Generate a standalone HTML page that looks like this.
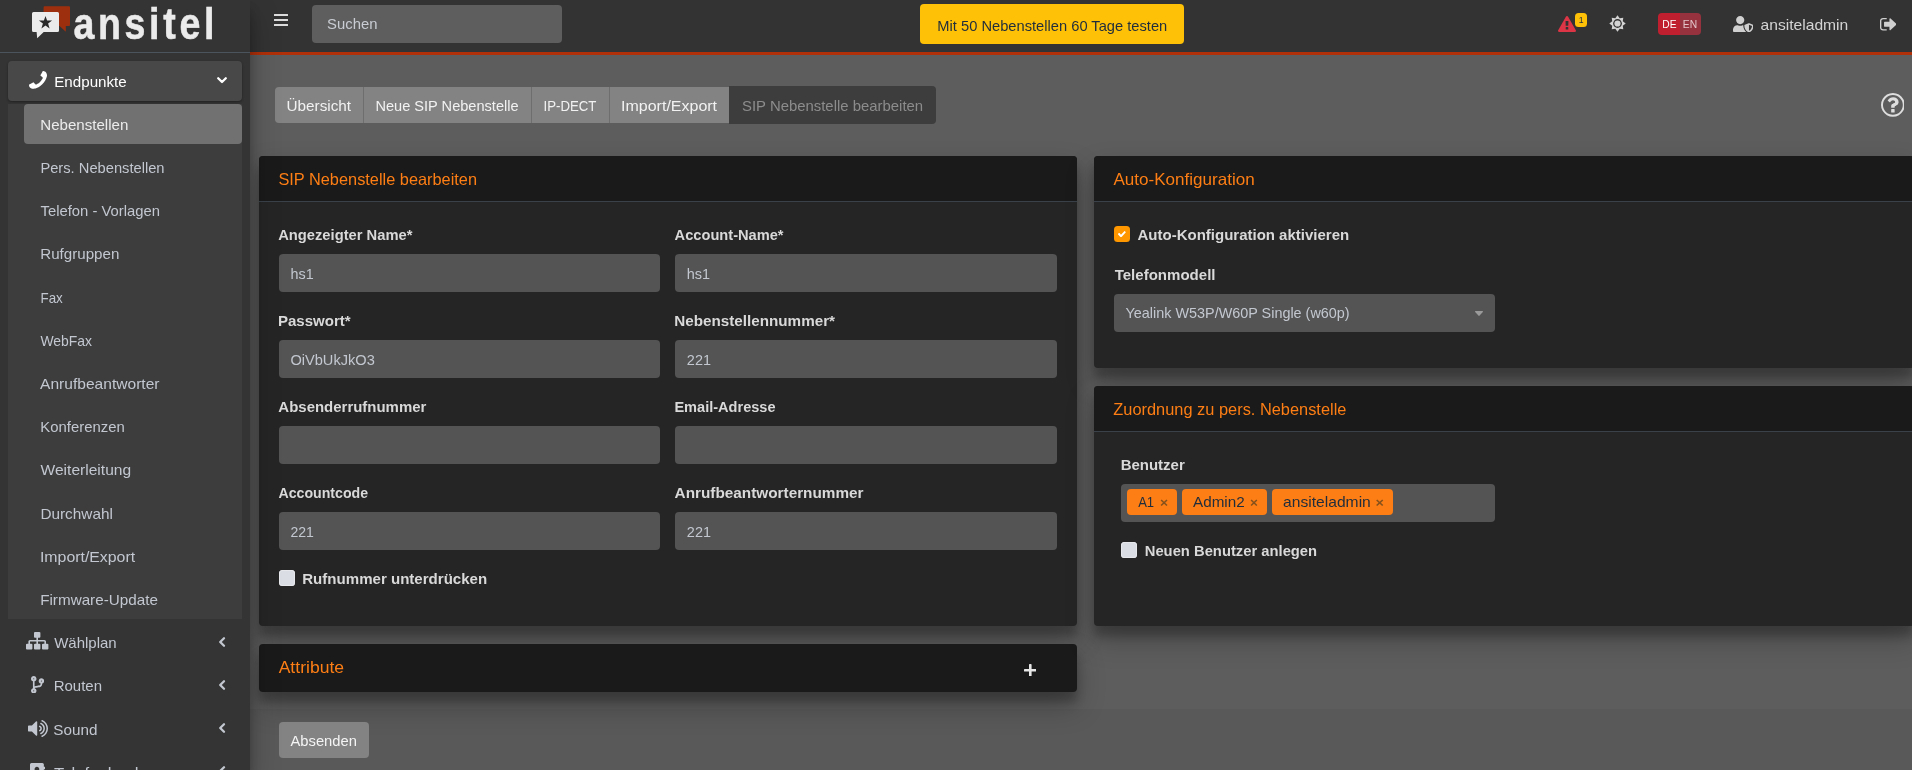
<!DOCTYPE html>
<html lang="de"><head><meta charset="utf-8"><title>ansitel</title>
<style>
*{box-sizing:border-box}
html,body{margin:0;padding:0}
body{width:1912px;height:770px;overflow:hidden;background:#5d5d5d;font-family:"Liberation Sans",sans-serif;font-size:15px;line-height:24px;color:#e0e0e0;position:relative}
svg.ic{display:block;position:absolute}
#txt{position:absolute;left:0;top:0;width:1912px;height:770px;z-index:50;overflow:hidden;will-change:transform}
.tx{position:absolute;white-space:nowrap;transform-origin:0 0;display:block}
/* sidebar */
#sb{position:absolute;left:0;top:0;width:250px;height:770px;background:#343434;z-index:30;box-shadow:0 14px 28px rgba(0,0,0,.25),0 10px 10px rgba(0,0,0,.22)}
#brand{position:absolute;left:0;top:0;width:250px;height:53px;border-bottom:1px solid #4b545c}
.ni{position:absolute;left:8px;width:234px;height:40px;border-radius:4px;color:#c2c7d0}
.ni.sub{left:24px;width:218px}
.ni.open{background:#484848;color:#fff;box-shadow:0 1px 3px rgba(0,0,0,.12),0 1px 2px rgba(0,0,0,.24)}
.ni.act{background:#717171}
#tree{position:absolute;left:8px;top:104px;width:234px;height:515px;background:#3d3d3d}
/* navbar */
#nav{position:absolute;left:250px;top:0;width:1662px;height:55px;background:#333;border-bottom:3px solid #b03009;z-index:20;box-shadow:inset 0 -1px 0 #2d3337,0 1px 0 #595f61}
#search{position:absolute;left:62px;top:5px;width:250px;height:38px;border-radius:4px;background:#5e5e5e}
#trial{position:absolute;left:670px;top:4px;width:264px;height:40px;border-radius:4px;background:#ffc107}
#badge{position:absolute;left:1325px;top:13px;width:12px;height:14px;border-radius:3.5px;background:#ffc107}
#lang{position:absolute;left:1408px;top:13px;width:43px;height:22px;border-radius:4px;overflow:hidden}
#lang i{position:absolute;top:0;height:22px;display:block}
#lang .de{left:0;width:22px;background:#c01f30}
#lang .en{left:22px;width:21px;background:#96323e}
/* tabs */
.tab{position:absolute;top:87px;height:36px;background:#838383}
.tab.dis{top:86px;height:38px;background:#3d3d3d;border-radius:0 4px 4px 0}
.sep{position:absolute;top:87px;height:36px;width:1px;background:#6e6e6e}
/* cards */
.card{position:absolute;background:#252525;border-radius:4px;box-shadow:0 14px 28px rgba(0,0,0,.25),0 10px 10px rgba(0,0,0,.22)}
.card .hd{position:absolute;left:0;top:0;right:0;height:46px;background:#1a1a1a;border-bottom:1px solid #3a4149;border-radius:4px 4px 0 0}
.inp{position:absolute;height:38px;border-radius:4px;background:#545454}
.cb{position:absolute;width:16px;height:16px;border-radius:3.5px;background:#dadde3;box-shadow:inset 0 0 0 1px #e6e8ec}
.cb.on{background:#ff9800;box-shadow:none}
.tag{position:absolute;top:5px;height:26px;border-radius:4px;background:#fd7e14}
#send{position:absolute;left:279px;top:722px;width:90px;height:36px;border-radius:4px;background:#838383}

#foot{position:absolute;left:250px;top:709px;width:1662px;height:61px;background:rgba(0,0,0,.045)}

</style></head>
<body>
<div id="sb">
  <div id="brand">
    <svg class="ic" style="left:30px;top:4px" width="44" height="38" viewBox="30 4 44 38">
      <path fill="#9e2f0e" d="M44.6 6.2h24.4a1 1 0 0 1 1 1v17.8a1 1 0 0 1-1 1h-3.2v5.8l-6.2-5.8h-16v-18.8a1 1 0 0 1 1-1z"/>
      <path fill="#ebebeb" d="M33.5 12h24a1.5 1.5 0 0 1 1.5 1.5v17a1.5 1.5 0 0 1-1.5 1.5h-13.8l-6.5 6.2l-.6-6.2h-3.1a1.5 1.5 0 0 1-1.5-1.5v-17a1.5 1.5 0 0 1 1.5-1.5z"/>
      <path fill="#2a2a2a" d="M45.5 15.9l1.6 4.7h5l-4 3l1.5 4.8l-4.1-2.9l-4.1 2.9l1.5-4.8l-4-3h5z"/>
    </svg>
  </div>
  <div class="ni open" style="top:61px"><svg class="ic" width="18" height="17.8" viewBox="0 0 1408 1408" preserveAspectRatio="none" style="left:20.5px;top:10.3px"><path fill="currentColor" d="M1408 1112Q1408 1139 1398.0 1182.5Q1388 1226 1377 1251Q1356 1301 1255 1357Q1161 1408 1069 1408Q1042 1408 1016.0 1404.5Q990 1401 958.5 1392.0Q927 1383 911.5 1377.5Q896 1372 856.0 1357.0Q816 1342 807 1339Q709 1304 632 1256Q505 1177 368.0 1040.0Q231 903 152 776Q104 699 69 601Q66 592 51.0 552.0Q36 512 30.5 496.5Q25 481 16.0 449.5Q7 418 3.5 392.0Q0 366 0 339Q0 247 51 153Q107 52 157 31Q182 20 225.5 10.0Q269 0 296 0Q310 0 317 3Q335 9 370 79Q381 98 400.0 133.0Q419 168 435.0 196.5Q451 225 466 250Q469 254 483.5 275.0Q498 296 505.0 310.5Q512 325 512 339Q512 359 483.5 389.0Q455 419 421.5 444.0Q388 469 359.5 497.0Q331 525 331 543Q331 552 336.0 565.5Q341 579 344.5 586.0Q348 593 358.5 610.0Q369 627 370 629Q446 766 544.0 864.0Q642 962 779 1038Q781 1039 798.0 1049.5Q815 1060 822.0 1063.5Q829 1067 842.5 1072.0Q856 1077 865 1077Q883 1077 911.0 1048.5Q939 1020 964.0 986.5Q989 953 1019.0 924.5Q1049 896 1069 896Q1083 896 1097.5 903.0Q1112 910 1133.0 924.5Q1154 939 1158 942Q1183 957 1211.5 973.0Q1240 989 1275.0 1008.0Q1310 1027 1329 1038Q1399 1073 1405 1091Q1408 1098 1408 1112Z" transform="translate(1408,0) scale(-1,1)"/></svg><svg class="ic" style="left:207px;top:13px" width="14" height="12" viewBox="0 0 14 12"><path d="M3.2 4.2L7 8L10.8 4.2" fill="none" stroke="#fff" stroke-width="2.3" stroke-linecap="round" stroke-linejoin="round"/></svg></div>
  <div id="tree"></div>
  <div class="ni sub act" style="top:104.2px"></div>
  <div class="ni" style="top:622.6px"><svg class="ic" width="22.4" height="17.6" viewBox="0 0 1792 1536" preserveAspectRatio="none" style="left:18.2px;top:9.7px"><path fill="currentColor" d="M1792 1120V1440Q1792 1480 1764.0 1508.0Q1736 1536 1696 1536H1376Q1336 1536 1308.0 1508.0Q1280 1480 1280 1440V1120Q1280 1080 1308.0 1052.0Q1336 1024 1376 1024H1472V832H960V1024H1056Q1096 1024 1124.0 1052.0Q1152 1080 1152 1120V1440Q1152 1480 1124.0 1508.0Q1096 1536 1056 1536H736Q696 1536 668.0 1508.0Q640 1480 640 1440V1120Q640 1080 668.0 1052.0Q696 1024 736 1024H832V832H320V1024H416Q456 1024 484.0 1052.0Q512 1080 512 1120V1440Q512 1480 484.0 1508.0Q456 1536 416 1536H96Q56 1536 28.0 1508.0Q0 1480 0 1440V1120Q0 1080 28.0 1052.0Q56 1024 96 1024H192V832Q192 780 230.0 742.0Q268 704 320 704H832V512H736Q696 512 668.0 484.0Q640 456 640 416V96Q640 56 668.0 28.0Q696 0 736 0H1056Q1096 0 1124.0 28.0Q1152 56 1152 96V416Q1152 456 1124.0 484.0Q1096 512 1056 512H960V704H1472Q1524 704 1562.0 742.0Q1600 780 1600 832V1024H1696Q1736 1024 1764.0 1052.0Q1792 1080 1792 1120Z"/></svg><svg class="ic chev" style="left:208px;top:12.3px" width="12" height="14" viewBox="0 0 12 14"><path d="M8 3.2L4.2 7L8 10.8" fill="none" stroke="#c2c7d0" stroke-width="2.3" stroke-linecap="round" stroke-linejoin="round"/></svg></div>
  <div class="ni" style="top:665.8px"><svg class="ic" style="left:22.8px;top:10.1px" width="13.2" height="17.6" viewBox="0 0 384 512"><path fill="currentColor" d="M384 144c0-44.200-35.800-80-80-80s-80 35.800-80 80c0 36.400 24.300 67.100 57.500 76.800-.6 16.100-4.200 28.500-11 36.900-15.400 19.200-49.300 22.400-85.200 25.700-28.200 2.600-57.400 5.400-81.300 16.900v-144c32.500-10.200 56-40.500 56-76.300 0-44.200-35.800-80-80-80S0 35.800 0 80c0 35.800 23.500 66.100 56 76.300v199.300C23.500 365.900 0 396.200 0 432c0 44.200 35.800 80 80 80s80-35.800 80-80c0-34-21.200-63.100-51.200-74.600 3.100-5.200 7.800-9.800 14.900-13.400 16.200-8.200 40.400-10.400 66.100-12.800 42.200-3.900 90-8.400 118.200-43.400 14-17.400 21.100-39.800 21.600-67.900 31.600-10.800 54.400-40.700 54.400-75.900zM80 64c8.800 0 16 7.200 16 16s-7.200 16-16 16-16-7.200-16-16 7.200-16 16-16zm0 384c-8.800 0-16-7.200-16-16s7.200-16 16-16 16 7.200 16 16-7.200 16-16 16zm224-320c8.800 0 16 7.200 16 16s-7.200 16-16 16-16-7.200-16-16 7.200-16 16-16z"/></svg><svg class="ic chev" style="left:208px;top:12.3px" width="12" height="14" viewBox="0 0 12 14"><path d="M8 3.2L4.2 7L8 10.8" fill="none" stroke="#c2c7d0" stroke-width="2.3" stroke-linecap="round" stroke-linejoin="round"/></svg></div>
  <div class="ni" style="top:709px"><svg class="ic" width="20" height="17" viewBox="0 0 1664 1422" preserveAspectRatio="none" style="left:19.5px;top:11px"><path fill="currentColor" d="M768 167V1255Q768 1281 749.0 1300.0Q730 1319 704.0 1319.0Q678 1319 659 1300L326 967H64Q38 967 19.0 948.0Q0 929 0 903V519Q0 493 19.0 474.0Q38 455 64 455H326L659 122Q678 103 704.0 103.0Q730 103 749.0 122.0Q768 141 768 167ZM997 946Q987 951 972 951Q946 951 927.0 932.5Q908 914 908 887Q908 866 920.0 851.5Q932 837 949.0 826.5Q966 816 983.0 803.5Q1000 791 1012.0 767.5Q1024 744 1024.0 711.0Q1024 678 1012.0 654.5Q1000 631 983.0 618.5Q966 606 949.0 595.5Q932 585 920.0 570.5Q908 556 908 535Q908 508 927.0 489.5Q946 471 972 471Q987 471 997 476Q1067 503 1109.5 569.0Q1152 635 1152.0 711.0Q1152 787 1109.5 852.5Q1067 918 997 946ZM1098 1182Q1085 1187 1073 1187Q1046 1187 1027.0 1168.0Q1008 1149 1008 1123Q1008 1084 1047 1064Q1103 1035 1123 1020Q1197 966 1238.5 884.5Q1280 803 1280.0 711.0Q1280 619 1238.5 537.5Q1197 456 1123 402Q1103 387 1047 358Q1008 338 1008 299Q1008 273 1027.0 254.0Q1046 235 1072 235Q1085 235 1098 240Q1238 299 1323.0 428.5Q1408 558 1408.0 711.0Q1408 864 1323.0 993.5Q1238 1123 1098 1182ZM1199 1417Q1186 1422 1173 1422Q1147 1422 1128.0 1403.0Q1109 1384 1109 1358Q1109 1322 1148 1299Q1155 1295 1170.5 1288.5Q1186 1282 1193 1278Q1239 1253 1275 1227Q1398 1136 1467.0 1000.0Q1536 864 1536.0 711.0Q1536 558 1467.0 422.0Q1398 286 1275 195Q1239 169 1193 144Q1186 140 1170.5 133.5Q1155 127 1148 123Q1109 100 1109 64Q1109 38 1128.0 19.0Q1147 0 1173 0Q1186 0 1199 5Q1410 96 1537.0 288.5Q1664 481 1664.0 711.0Q1664 941 1537.0 1133.5Q1410 1326 1199 1417Z"/></svg><svg class="ic chev" style="left:208px;top:12.3px" width="12" height="14" viewBox="0 0 12 14"><path d="M8 3.2L4.2 7L8 10.8" fill="none" stroke="#c2c7d0" stroke-width="2.3" stroke-linecap="round" stroke-linejoin="round"/></svg></div>
  <div class="ni" style="top:752.2px"><svg class="ic" width="15" height="17.6" viewBox="0 0 1664 1792" preserveAspectRatio="none" style="left:22px;top:10.5px"><path fill="currentColor" d="M1201 1238Q1201 1181 1195.5 1131.0Q1190 1081 1174.5 1030.5Q1159 980 1135.0 944.5Q1111 909 1071.0 886.5Q1031 864 980 864Q974 868 946.5 884.5Q919 901 904.0 909.0Q889 917 863.5 929.0Q838 941 814.5 946.0Q791 951 768.0 951.0Q745 951 721.5 946.0Q698 941 672.5 929.0Q647 917 632.0 909.0Q617 901 589.5 884.5Q562 868 556 864Q505 864 465.0 886.5Q425 909 401.0 944.5Q377 980 361.5 1030.5Q346 1081 340.5 1131.0Q335 1181 335 1238Q335 1311 377.0 1359.5Q419 1408 480 1408H1056Q1117 1408 1159.0 1359.5Q1201 1311 1201 1238ZM1028 644Q1028 536 951.5 460.0Q875 384 768.0 384.0Q661 384 584.5 460.0Q508 536 508 644Q508 751 584.5 827.0Q661 903 768.0 903.0Q875 903 951.5 827.0Q1028 751 1028 644ZM1664 1184V1376Q1664 1390 1655.0 1399.0Q1646 1408 1632 1408H1536V1632Q1536 1698 1489.0 1745.0Q1442 1792 1376 1792H160Q94 1792 47.0 1745.0Q0 1698 0 1632V160Q0 94 47.0 47.0Q94 0 160 0H1376Q1442 0 1489.0 47.0Q1536 94 1536 160V384H1632Q1646 384 1655.0 393.0Q1664 402 1664 416V608Q1664 622 1655.0 631.0Q1646 640 1632 640H1536V768H1632Q1646 768 1655.0 777.0Q1664 786 1664 800V992Q1664 1006 1655.0 1015.0Q1646 1024 1632 1024H1536V1152H1632Q1646 1152 1655.0 1161.0Q1664 1170 1664 1184Z"/></svg><svg class="ic chev" style="left:208px;top:12.3px" width="12" height="14" viewBox="0 0 12 14"><path d="M8 3.2L4.2 7L8 10.8" fill="none" stroke="#c2c7d0" stroke-width="2.3" stroke-linecap="round" stroke-linejoin="round"/></svg></div>
</div>

<div id="nav">
  <svg class="ic" style="left:24px;top:14px" width="14" height="12" viewBox="0 0 14 12"><path fill="#dcdcdc" d="M.3 0h13.4a.3.3 0 0 1 .3.3v1.400a.3.3 0 0 1-.3.300h-13.400a.3.3 0 0 1-.3-.3v-1.400a.3.3 0 0 1 .3-.3zM.3 5h13.400a.3.3 0 0 1 .3.300v1.400a.3.3 0 0 1-.3.300h-13.400a.3.3 0 0 1-.3-.3v-1.400a.3.3 0 0 1 .3-.3zM.3 10h13.400a.3.3 0 0 1 .3.300v1.400a.3.3 0 0 1-.3.300h-13.400a.3.3 0 0 1-.3-.3v-1.400a.3.3 0 0 1 .3-.3z"/></svg>
  <div id="search"></div>
  <div id="trial"></div>
  <svg class="ic" width="18" height="16" viewBox="0 0 1794 1664" preserveAspectRatio="none" style="left:1308.1px;top:16px"><path fill="#dc3545" d="M1025.013888888889 1375.0V1185.0Q1025.013888888889 1171.0 1015.5138888888889 1161.5Q1006.0138888888889 1152.0 993.0138888888889 1152.0H801.0138888888889Q788.0138888888889 1152.0 778.5138888888889 1161.5Q769.0138888888889 1171.0 769.0138888888889 1185.0V1375.0Q769.0138888888889 1389.0 778.5138888888889 1398.5Q788.0138888888889 1408.0 801.0138888888889 1408.0H993.0138888888889Q1006.0138888888889 1408.0 1015.5138888888889 1398.5Q1025.013888888889 1389.0 1025.013888888889 1375.0ZM1023.0138888888889 1001.0 1041.013888888889 542.0Q1041.013888888889 530.0 1031.013888888889 523.0Q1018.0138888888889 512.0 1007.0138888888889 512.0H787.0138888888889Q776.0138888888889 512.0 763.0138888888889 523.0Q753.0138888888889 530.0 753.0138888888889 544.0L770.0138888888889 1001.0Q770.0138888888889 1011.0 780.0138888888889 1017.5Q790.0138888888889 1024.0 804.0138888888889 1024.0H989.0138888888889Q1003.0138888888889 1024.0 1012.5138888888889 1017.5Q1022.0138888888889 1011.0 1023.0138888888889 1001.0ZM1009.0138888888889 67.0 1777.013888888889 1475.0Q1812.013888888889 1538.0 1775.013888888889 1601.0Q1758.013888888889 1630.0 1728.513888888889 1647.0Q1699.013888888889 1664.0 1665.013888888889 1664.0H129.01388888888889Q95.01388888888889 1664.0 65.51388888888889 1647.0Q36.013888888888886 1630.0 19.013888888888886 1601.0Q-17.986111111111114 1538.0 17.013888888888886 1475.0L785.0138888888889 67.0Q802.0138888888889 36.0 832.0138888888889 18.0Q862.0138888888889 0.0 897.0138888888889 0.0Q932.0138888888889 0.0 962.0138888888889 18.0Q992.0138888888889 36.0 1009.0138888888889 67.0Z"/></svg>
  <div id="badge"></div>
  <svg class="ic" style="left:1359px;top:15.1px" width="17" height="17" viewBox="-8.5 -8.5 17 17"><path fill="#d2d2d2" d="M0.00 -8.20L2.18 -5.27L5.80 -5.80L5.27 -2.18L8.20 0.00L5.27 2.18L5.80 5.80L2.18 5.27L0.00 8.20L-2.18 5.27L-5.80 5.80L-5.27 2.18L-8.20 0.00L-5.27 -2.18L-5.80 -5.80L-2.18 -5.27Z"/><circle r="4.4" fill="#333"/><circle r="3.1" fill="#d2d2d2"/></svg>
  <div id="lang"><i class="de"></i><i class="en"></i></div>
  <svg class="ic" style="left:1482.8px;top:15.8px" width="20.6" height="16.4" preserveAspectRatio="none" viewBox="0 0 640 512"><path fill="#d0d0d0" d="M622.3 271.1l-115.2-45c-4.1-1.600-12.600-3.700-22.200 0l-115.200 45c-10.700 4.200-17.700 14-17.700 24.900 0 111.600 68.700 188.800 132.900 213.900 9.600 3.700 18 1.600 22.200 0C558.400 489.900 640 420.500 640 296c0-10.900-7-20.700-17.700-24.900zM496 462.400V273.300l95.500 37.300c-5.600 87.100-60.900 135.400-95.500 151.800zM224 256c70.700 0 128-57.300 128-128S294.700 0 224 0 96 57.300 96 128s57.300 128 128 128zm96 40c0-2.500.8-4.800 1.100-7.200-2.500-.1-4.900-.8-7.500-.8h-16.700c-22.200 10.200-46.900 16-72.900 16s-50.600-5.800-72.900-16h-16.700C60.200 288 0 348.200 0 422.400V464c0 26.500 21.500 48 48 48h352c6.800 0 13.300-1.500 19.200-4-54-42.900-99.200-116.700-99.200-212z"/></svg>
  <svg class="ic" width="16.5" height="12.5" viewBox="0 0 1568 1280" preserveAspectRatio="none" style="left:1629.5px;top:18px"><path fill="#d0d0d0" d="M640 1184Q640 1188 641.0 1204.0Q642 1220 641.5 1230.5Q641 1241 638.5 1254.0Q636 1267 628.5 1273.5Q621 1280 608 1280H288Q169 1280 84.5 1195.5Q0 1111 0 992V288Q0 169 84.5 84.5Q169 0 288 0H608Q621 0 630.5 9.5Q640 19 640 32Q640 36 641.0 52.0Q642 68 641.5 78.5Q641 89 638.5 102.0Q636 115 628.5 121.5Q621 128 608 128H288Q222 128 175.0 175.0Q128 222 128 288V992Q128 1058 175.0 1105.0Q222 1152 288 1152H576Q577 1152 587.0 1152.0Q597 1152 600.0 1152.0Q603 1152 611.5 1153.0Q620 1154 623.0 1156.0Q626 1158 631.0 1161.5Q636 1165 638.0 1170.5Q640 1176 640 1184ZM1549 685 1005 1229Q986 1248 960.0 1248.0Q934 1248 915.0 1229.0Q896 1210 896 1184V896H448Q422 896 403.0 877.0Q384 858 384 832V448Q384 422 403.0 403.0Q422 384 448 384H896V96Q896 70 915.0 51.0Q934 32 960.0 32.0Q986 32 1005 51L1549 595Q1568 614 1568.0 640.0Q1568 666 1549 685Z"/></svg>
</div>

<svg class="ic" width="23.8" height="23.8" viewBox="0 0 1536 1536" preserveAspectRatio="none" style="left:1880.6px;top:93.3px"><path fill="#dedede" d="M880.0 1072.0V1232.0Q880.0 1246.0 871.0 1255.0Q862.0 1264.0 848.0 1264.0H688.0Q674.0 1264.0 665.0 1255.0Q656.0 1246.0 656.0 1232.0V1072.0Q656.0 1058.0 665.0 1049.0Q674.0 1040.0 688.0 1040.0H848.0Q862.0 1040.0 871.0 1049.0Q880.0 1058.0 880.0 1072.0ZM1136.0 576.0Q1136.0 626.0 1121.0 666.0Q1106.0 706.0 1075.5 735.0Q1045.0 764.0 1023.5 779.0Q1002.0 794.0 964.0 815.0Q932.0 833.0 917.5 843.0Q903.0 853.0 891.5 867.0Q880.0 881.0 880.0 896.0V928.0Q880.0 942.0 871.0 951.0Q862.0 960.0 848.0 960.0H688.0Q674.0 960.0 665.0 951.0Q656.0 942.0 656.0 928.0V860.0Q656.0 825.0 666.5 795.5Q677.0 766.0 690.5 748.0Q704.0 730.0 729.5 712.5Q755.0 695.0 770.5 687.0Q786.0 679.0 815.0 666.0Q868.0 641.0 890.0 623.0Q912.0 605.0 912.0 574.0Q912.0 532.0 868.5 502.5Q825.0 473.0 773.0 473.0Q717.0 473.0 678.0 500.0Q649.0 520.0 598.0 583.0Q589.0 595.0 573.0 595.0Q562.0 595.0 554.0 589.0L446.0 507.0Q436.0 500.0 434.0 487.0Q432.0 474.0 439.0 464.0Q561.0 272.0 788.0 272.0Q917.0 272.0 1026.5 361.5Q1136.0 451.0 1136.0 576.0ZM1016.5 179.0Q898.0 128.0 768.0 128.0Q638.0 128.0 519.5 179.0Q401.0 230.0 315.5 315.5Q230.0 401.0 179.0 519.5Q128.0 638.0 128.0 768.0Q128.0 898.0 179.0 1016.5Q230.0 1135.0 315.5 1220.5Q401.0 1306.0 519.5 1357.0Q638.0 1408.0 768.0 1408.0Q898.0 1408.0 1016.5 1357.0Q1135.0 1306.0 1220.5 1220.5Q1306.0 1135.0 1357.0 1016.5Q1408.0 898.0 1408.0 768.0Q1408.0 638.0 1357.0 519.5Q1306.0 401.0 1220.5 315.5Q1135.0 230.0 1016.5 179.0ZM1433.0 382.5Q1536.0 559.0 1536.0 768.0Q1536.0 977.0 1433.0 1153.5Q1330.0 1330.0 1153.5 1433.0Q977.0 1536.0 768.0 1536.0Q559.0 1536.0 382.5 1433.0Q206.0 1330.0 103.0 1153.5Q0.0 977.0 0.0 768.0Q0.0 559.0 103.0 382.5Q206.0 206.0 382.5 103.0Q559.0 0.0 768.0 0.0Q977.0 0.0 1153.5 103.0Q1330.0 206.0 1433.0 382.5Z"/></svg>

<div class="tab" style="left:275px;width:88px;border-radius:4px 0 0 4px"></div><div class="sep" style="left:363px"></div>
<div class="tab" style="left:364px;width:167px"></div><div class="sep" style="left:531px"></div>
<div class="tab" style="left:532px;width:77px"></div><div class="sep" style="left:609px"></div>
<div class="tab" style="left:610px;width:119px"></div>
<div class="tab dis" style="left:729px;width:207px"></div>

<div class="card" style="left:259px;top:156px;width:818px;height:470px">
  <div class="hd"></div>
  <div class="inp" style="left:20px;top:98px;width:381px"></div>
  <div class="inp" style="left:416px;top:98px;width:382px"></div>
  <div class="inp" style="left:20px;top:184px;width:381px"></div>
  <div class="inp" style="left:416px;top:184px;width:382px"></div>
  <div class="inp" style="left:20px;top:270px;width:381px"></div>
  <div class="inp" style="left:416px;top:270px;width:382px"></div>
  <div class="inp" style="left:20px;top:356px;width:381px"></div>
  <div class="inp" style="left:416px;top:356px;width:382px"></div>
  <div class="cb" style="left:20px;top:414px"></div>
</div>

<div class="card" style="left:259px;top:644px;width:818px;height:48px;background:#1a1a1a">
  <svg class="ic" style="left:764.9px;top:19.5px" width="12.6" height="12.6" viewBox="0 0 12.6 12.6"><path fill="#e6e6e6" d="M5 .7a.7.7 0 0 1 .7-.7h1.200a.7.7 0 0 1 .7.700v4.300h4.300a.7.7 0 0 1 .7.700v1.200a.7.7 0 0 1-.7.700h-4.300v4.300a.7.7 0 0 1-.7.700h-1.200a.7.7 0 0 1-.7-.7v-4.300h-4.300a.7.700 0 0 1-.7-.7v-1.200a.7.700 0 0 1 .7-.7h4.300z"/></svg>
</div>

<div id="foot"></div>
<div id="send"></div>

<div class="card" style="left:1094px;top:156px;width:820px;height:212px">
  <div class="hd"></div>
  <div class="cb on" style="left:20px;top:70px"><svg class="ic" width="7.8" height="6.4" viewBox="0 0 1550 1188" preserveAspectRatio="none" style="left:4.1px;top:4.8px"><path fill="#fff" d="M1522.0 300.0 798.0 1024.0 662.0 1160.0Q634.0 1188.0 594.0 1188.0Q554.0 1188.0 526.0 1160.0L390.0 1024.0L28.0 662.0Q0.0 634.0 0.0 594.0Q0.0 554.0 28.0 526.0L164.0 390.0Q192.0 362.0 232.0 362.0Q272.0 362.0 300.0 390.0L594.0 685.0L1250.0 28.0Q1278.0 0.0 1318.0 0.0Q1358.0 0.0 1386.0 28.0L1522.0 164.0Q1550.0 192.0 1550.0 232.0Q1550.0 272.0 1522.0 300.0Z"/></svg></div>
  <div class="inp" style="left:20px;top:138px;width:381px"><svg class="ic" width="8" height="5" viewBox="0 0 1024 576" preserveAspectRatio="none" style="left:361px;top:17px"><path fill="#9a9a9a" d="M1005.0 109 557.0 557Q538.0 576 512.0 576.0Q486.0 576 467.0 557L19.0 109Q0.0 90 0.0 64.0Q0.0 38 19.0 19.0Q38.0 0 64.0 0H960.0Q986.0 0 1005.0 19.0Q1024.0 38 1024.0 64.0Q1024.0 90 1005.0 109Z"/></svg></div>
</div>

<div class="card" style="left:1094px;top:386px;width:820px;height:240px">
  <div class="hd"></div>
  <div class="inp" style="left:27px;top:98px;width:374px">
    <div class="tag" style="left:6px;width:50px"></div>
    <div class="tag" style="left:61px;width:85px"></div>
    <div class="tag" style="left:151px;width:121px"></div>
  </div>
  <div class="cb" style="left:27px;top:156px"></div>
</div>
<div id="txt">
<span class="tx" style="left:73px;top:-2.00px;font-size:44.8px;line-height:50px;height:50px;color:#ebebeb;transform:translateX(0.39px) scaleX(0.8376);font-weight:bold;letter-spacing:4.4px;-webkit-text-stroke:0.55px #ebebeb">ansitel</span>
<span class="tx" style="left:54px;top:73.00px;font-size:15px;line-height:17px;height:17px;color:#ffffff;transform:translateX(0.26px) scaleX(1.0109)">Endpunkte</span>
<span class="tx" style="left:40px;top:116.00px;font-size:15px;line-height:17px;height:17px;color:#ececec;transform:translateX(0.25px) scaleX(1.0055)">Nebenstellen</span>
<span class="tx" style="left:40px;top:159.00px;font-size:15px;line-height:17px;height:17px;color:#c2c7d0;transform:translateX(0.40px) scaleX(0.9794)">Pers. Nebenstellen</span>
<span class="tx" style="left:40px;top:202.00px;font-size:15px;line-height:17px;height:17px;color:#c2c7d0;transform:translateX(0.54px) scaleX(0.9884)">Telefon - Vorlagen</span>
<span class="tx" style="left:40px;top:245.00px;font-size:15px;line-height:17px;height:17px;color:#c2c7d0;transform:translateX(0.23px) scaleX(1.0090)">Rufgruppen</span>
<span class="tx" style="left:40px;top:289.00px;font-size:15px;line-height:17px;height:17px;color:#c2c7d0;transform:translateX(0.51px) scaleX(0.8897)">Fax</span>
<span class="tx" style="left:40px;top:332.00px;font-size:15px;line-height:17px;height:17px;color:#c2c7d0;transform:translateX(0.38px) scaleX(0.9299)">WebFax</span>
<span class="tx" style="left:40px;top:375.00px;font-size:15px;line-height:17px;height:17px;color:#c2c7d0;transform:translateX(0.02px) scaleX(1.0385)">Anrufbeantworter</span>
<span class="tx" style="left:40px;top:418.00px;font-size:15px;line-height:17px;height:17px;color:#c2c7d0;transform:translateX(0.33px) scaleX(0.9918)">Konferenzen</span>
<span class="tx" style="left:40px;top:461.00px;font-size:15px;line-height:17px;height:17px;color:#c2c7d0;transform:translateX(0.54px) scaleX(1.0380)">Weiterleitung</span>
<span class="tx" style="left:40px;top:505.00px;font-size:15px;line-height:17px;height:17px;color:#c2c7d0;transform:translateX(0.40px) scaleX(1.0228)">Durchwahl</span>
<span class="tx" style="left:39px;top:548.00px;font-size:15px;line-height:17px;height:17px;color:#c2c7d0;transform:translateX(0.95px) scaleX(1.0572)">Import/Export</span>
<span class="tx" style="left:40px;top:591.00px;font-size:15px;line-height:17px;height:17px;color:#c2c7d0;transform:translateX(0.18px) scaleX(1.0158)">Firmware-Update</span>
<span class="tx" style="left:54px;top:634.00px;font-size:15px;line-height:17px;height:17px;color:#c2c7d0;transform:translateX(0.15px) scaleX(0.9991)">Wählplan</span>
<span class="tx" style="left:53px;top:677.00px;font-size:15px;line-height:17px;height:17px;color:#c2c7d0;transform:translateX(0.66px) scaleX(0.9986)">Routen</span>
<span class="tx" style="left:53px;top:721.00px;font-size:15px;line-height:17px;height:17px;color:#c2c7d0;transform:translateX(0.32px) scaleX(1.0166)">Sound</span>
<span class="tx" style="left:53px;top:764.00px;font-size:15px;line-height:17px;height:17px;color:#c2c7d0;transform:translateX(0.96px) scaleX(1.1133)">Telefonbuch</span>
<span class="tx" style="left:327px;top:15.00px;font-size:15px;line-height:17px;height:17px;color:#c9cdd3;transform:translateX(0.08px) scaleX(0.9890)">Suchen</span>
<span class="tx" style="left:937px;top:17.00px;font-size:15px;line-height:17px;height:17px;color:#1f2d3d;transform:translateX(0.37px) scaleX(0.9788)">Mit 50 Nebenstellen 60 Tage testen</span>
<span class="tx" style="left:1578px;top:15.00px;font-size:9px;line-height:10px;height:10px;color:#1f2d3d;transform:translateX(0.72px) scaleX(0.9695)">1</span>
<span class="tx" style="left:1662px;top:18.00px;font-size:11px;line-height:12px;height:12px;color:#ffffff;transform:translateX(0.30px) scaleX(0.9288)">DE</span>
<span class="tx" style="left:1682px;top:18.00px;font-size:11px;line-height:12px;height:12px;color:#e3c5c9;transform:translateX(0.81px) scaleX(0.9349)">EN</span>
<span class="tx" style="left:1760px;top:16.00px;font-size:15px;line-height:17px;height:17px;color:#d4d4d4;transform:translateX(0.56px) scaleX(1.0416)">ansiteladmin</span>
<span class="tx" style="left:286px;top:97.00px;font-size:15px;line-height:17px;height:17px;color:#f2f2f2;transform:translateX(0.49px) scaleX(1.0194)">Übersicht</span>
<span class="tx" style="left:375px;top:97.00px;font-size:15px;line-height:17px;height:17px;color:#f2f2f2;transform:translateX(0.41px) scaleX(0.9720)">Neue SIP Nebenstelle</span>
<span class="tx" style="left:543px;top:97.00px;font-size:15px;line-height:17px;height:17px;color:#f2f2f2;transform:translateX(0.51px) scaleX(0.8824)">IP-DECT</span>
<span class="tx" style="left:621px;top:97.00px;font-size:15px;line-height:17px;height:17px;color:#f2f2f2;transform:translateX(0.04px) scaleX(1.0665)">Import/Export</span>
<span class="tx" style="left:741px;top:97.00px;font-size:15px;line-height:17px;height:17px;color:#8c8c8c;transform:translateX(1.00px) scaleX(0.9931)">SIP Nebenstelle bearbeiten</span>
<span class="tx" style="left:278px;top:170.00px;font-size:16.5px;line-height:18px;height:18px;color:#fd7e14;transform:translateX(0.41px) scaleX(0.9901)">SIP Nebenstelle bearbeiten</span>
<span class="tx" style="left:1113px;top:170.00px;font-size:16.5px;line-height:18px;height:18px;color:#fd7e14;transform:translateX(0.46px) scaleX(1.0338)">Auto-Konfiguration</span>
<span class="tx" style="left:1113px;top:400.00px;font-size:16.5px;line-height:18px;height:18px;color:#fd7e14;transform:translateX(0.34px) scaleX(0.9926)">Zuordnung zu pers. Nebenstelle</span>
<span class="tx" style="left:278px;top:658.00px;font-size:16.5px;line-height:18px;height:18px;color:#fd7e14;transform:translateX(0.63px) scaleX(1.0657)">Attribute</span>
<span class="tx" style="left:278px;top:226.00px;font-size:15px;line-height:17px;height:17px;color:#d9d9d9;transform:translateX(0.16px) scaleX(0.9822);font-weight:bold">Angezeigter Name*</span>
<span class="tx" style="left:674px;top:226.00px;font-size:15px;line-height:17px;height:17px;color:#d9d9d9;transform:translateX(0.61px) scaleX(0.9754);font-weight:bold">Account-Name*</span>
<span class="tx" style="left:277px;top:312.00px;font-size:15px;line-height:17px;height:17px;color:#d9d9d9;transform:translateX(0.93px) scaleX(1.0034);font-weight:bold">Passwort*</span>
<span class="tx" style="left:674px;top:312.00px;font-size:15px;line-height:17px;height:17px;color:#d9d9d9;transform:translateX(0.18px) scaleX(1.0156);font-weight:bold">Nebenstellennummer*</span>
<span class="tx" style="left:278px;top:398.00px;font-size:15px;line-height:17px;height:17px;color:#d9d9d9;transform:translateX(0.36px) scaleX(0.9977);font-weight:bold">Absenderrufnummer</span>
<span class="tx" style="left:674px;top:398.00px;font-size:15px;line-height:17px;height:17px;color:#d9d9d9;transform:translateX(0.40px) scaleX(0.9707);font-weight:bold">Email-Adresse</span>
<span class="tx" style="left:278px;top:484.00px;font-size:15px;line-height:17px;height:17px;color:#d9d9d9;transform:translateX(0.42px) scaleX(0.9444);font-weight:bold">Accountcode</span>
<span class="tx" style="left:674px;top:484.00px;font-size:15px;line-height:17px;height:17px;color:#d9d9d9;transform:translateX(0.60px) scaleX(1.0213);font-weight:bold">Anrufbeantworternummer</span>
<span class="tx" style="left:302px;top:570.00px;font-size:15px;line-height:17px;height:17px;color:#d9d9d9;transform:translateX(0.24px) scaleX(1.0042);font-weight:bold">Rufnummer unterdrücken</span>
<span class="tx" style="left:1137px;top:226.00px;font-size:15px;line-height:17px;height:17px;color:#d9d9d9;transform:translateX(0.54px) scaleX(0.9996);font-weight:bold">Auto-Konfiguration aktivieren</span>
<span class="tx" style="left:1114px;top:266.00px;font-size:15px;line-height:17px;height:17px;color:#d9d9d9;transform:translateX(0.69px) scaleX(1.0023);font-weight:bold">Telefonmodell</span>
<span class="tx" style="left:1120px;top:456.00px;font-size:15px;line-height:17px;height:17px;color:#d9d9d9;transform:translateX(0.65px) scaleX(0.9987);font-weight:bold">Benutzer</span>
<span class="tx" style="left:1144px;top:542.00px;font-size:15px;line-height:17px;height:17px;color:#d9d9d9;transform:translateX(0.74px) scaleX(0.9848);font-weight:bold">Neuen Benutzer anlegen</span>
<span class="tx" style="left:290px;top:265.00px;font-size:15px;line-height:17px;height:17px;color:#c3c8d0;transform:translateX(0.55px) scaleX(0.9556)">hs1</span>
<span class="tx" style="left:686px;top:265.00px;font-size:15px;line-height:17px;height:17px;color:#c3c8d0;transform:translateX(0.64px) scaleX(0.9628)">hs1</span>
<span class="tx" style="left:290px;top:351.00px;font-size:15px;line-height:17px;height:17px;color:#c3c8d0;transform:translateX(0.41px) scaleX(0.9731)">OiVbUkJkO3</span>
<span class="tx" style="left:686px;top:351.00px;font-size:15px;line-height:17px;height:17px;color:#c3c8d0;transform:translateX(0.85px) scaleX(0.9630)">221</span>
<span class="tx" style="left:290px;top:523.00px;font-size:15px;line-height:17px;height:17px;color:#c3c8d0;transform:translateX(0.42px) scaleX(0.9365)">221</span>
<span class="tx" style="left:686px;top:523.00px;font-size:15px;line-height:17px;height:17px;color:#c3c8d0;transform:translateX(0.85px) scaleX(0.9630)">221</span>
<span class="tx" style="left:1125px;top:304.00px;font-size:15px;line-height:17px;height:17px;color:#c3c8d0;transform:translateX(0.58px) scaleX(0.9596)">Yealink W53P/W60P Single (w60p)</span>
<span class="tx" style="left:1138px;top:493.00px;font-size:15px;line-height:17px;height:17px;color:#1f2d3d;transform:translateX(0.18px) scaleX(0.8678)">A1</span>
<span class="tx" style="left:1159px;top:496.00px;font-size:12.5px;line-height:14px;height:14px;color:#85511c;transform:translateX(0.89px) scaleX(1.1085);font-weight:bold">×</span>
<span class="tx" style="left:1193px;top:493.00px;font-size:15px;line-height:17px;height:17px;color:#1f2d3d;transform:translateX(0.03px) scaleX(1.0161)">Admin2</span>
<span class="tx" style="left:1250px;top:496.00px;font-size:12.5px;line-height:14px;height:14px;color:#85511c;transform:translateX(0.02px) scaleX(1.0842);font-weight:bold">×</span>
<span class="tx" style="left:1283px;top:493.00px;font-size:15px;line-height:17px;height:17px;color:#1f2d3d;transform:translateX(0.08px) scaleX(1.0415)">ansiteladmin</span>
<span class="tx" style="left:1375px;top:496.00px;font-size:12.5px;line-height:14px;height:14px;color:#85511c;transform:translateX(0.55px) scaleX(1.1453);font-weight:bold">×</span>
<span class="tx" style="left:290px;top:732.00px;font-size:15px;line-height:17px;height:17px;color:#f4f4f4;transform:translateX(0.45px) scaleX(0.9838)">Absenden</span>
</div>

</body></html>
